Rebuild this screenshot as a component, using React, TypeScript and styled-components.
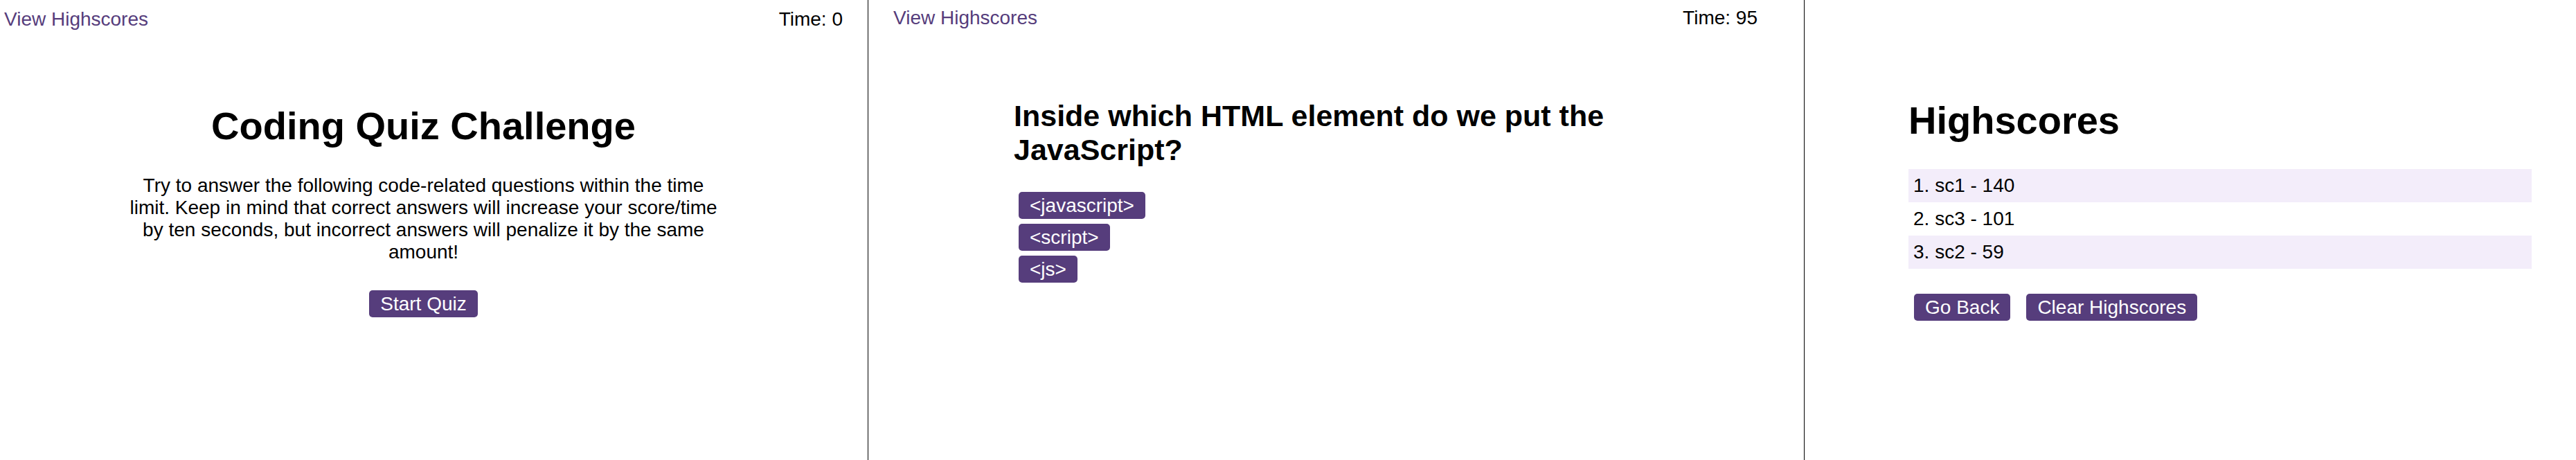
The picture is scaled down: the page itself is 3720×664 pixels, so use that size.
import React from 'react'
import styled, { createGlobalStyle } from 'styled-components'

const GlobalStyle = createGlobalStyle`
  html, body {
    margin: 0;
    padding: 0;
    background: #fff;
  }
  body {
    font-family: "Liberation Sans", Arial, sans-serif;
    font-size: 28px;
    color: #000;
  }
`

const purple = '#563d7c'

const Page = styled.div`
  display: flex;
  width: 3720px;
  height: 664px;
  overflow: hidden;
`

const Panel = styled.section<{ $width?: number; $pad: string; $last?: boolean }>`
  box-sizing: border-box;
  flex: ${(p) => (p.$width ? `0 0 ${p.$width}px` : '1 1 auto')};
  height: 100%;
  padding: ${(p) => p.$pad};
  border-right: ${(p) => (p.$last ? 'none' : '1px solid #000')};
  display: flex;
  flex-direction: column;
`

const Header = styled.header<{ $top: number }>`
  display: flex;
  justify-content: space-between;
  align-items: baseline;
  padding-top: ${(p) => p.$top}px;
  line-height: normal;
`

const HighscoreLink = styled.a`
  color: ${purple};
  text-decoration: none;
  cursor: pointer;
`

const Timer = styled.span`
  color: #000;
`

const Intro = styled.div`
  display: flex;
  flex-direction: column;
  align-items: center;
  text-align: center;
  padding-top: 105px;
`

const Title = styled.h1`
  margin: 0 0 38px;
  font-size: 56px;
  font-weight: 700;
  line-height: normal;
`

const Lead = styled.p`
  margin: 0 0 39px;
  max-width: 860px;
  line-height: normal;
`

const Button = styled.button`
  font-family: inherit;
  font-size: 28px;
  line-height: normal;
  color: #fff;
  background: ${purple};
  border: none;
  border-radius: 5px;
  padding: 3px 16px;
  height: 39px;
  cursor: pointer;
`

const Quiz = styled.div`
  width: 900px;
  margin: 101px auto 0;
`

const Question = styled.h2`
  margin: 0 0 36px;
  font-size: 43px;
  font-weight: 700;
  line-height: normal;
`

const Answers = styled.div`
  display: flex;
  flex-direction: column;
  align-items: flex-start;
  gap: 7px;
  padding-left: 7px;
`

const Scores = styled.div`
  width: 900px;
  padding-top: 141px;
`

const ScoreList = styled.ol`
  list-style: none;
  margin: 0;
  padding: 0;
`

const ScoreRow = styled.li<{ $shaded: boolean }>`
  height: 48px;
  box-sizing: border-box;
  padding: 8px 7px;
  line-height: normal;
  background: ${(p) => (p.$shaded ? '#f3edfa' : 'transparent')};
`

const Actions = styled.div`
  display: flex;
  gap: 23px;
  margin-top: 36px;
  padding-left: 8px;
`

const scores = [
  { name: 'sc1', score: 140 },
  { name: 'sc3', score: 101 },
  { name: 'sc2', score: 59 }
]

const answers = ['<javascript>', '<script>', '<js>']

const App: React.FC = () => {
  return (
    <>
      <GlobalStyle />
      <Page>
        <Panel $width={1254} $pad="0 36px 0 6px">
          <Header $top={12}>
            <HighscoreLink>View Highscores</HighscoreLink>
            <Timer>Time: 0</Timer>
          </Header>
          <Intro>
            <Title>Coding Quiz Challenge</Title>
            <Lead>
              Try to answer the following code-related questions within the time limit. Keep in mind
              that correct answers will increase your score/time by ten seconds, but incorrect answers
              will penalize it by the same amount!
            </Lead>
            <Button>Start Quiz</Button>
          </Intro>
        </Panel>

        <Panel $width={1352} $pad="0 67px 0 36px">
          <Header $top={10}>
            <HighscoreLink>View Highscores</HighscoreLink>
            <Timer>Time: 95</Timer>
          </Header>
          <Quiz>
            <Question>Inside which HTML element do we put the JavaScript?</Question>
            <Answers>
              {answers.map((a) => (
                <Button key={a}>{a}</Button>
              ))}
            </Answers>
          </Quiz>
        </Panel>

        <Panel $pad="0 0 0 150px" $last>
          <Scores>
            <Title>Highscores</Title>
            <ScoreList>
              {scores.map((s, i) => (
                <ScoreRow key={s.name} $shaded={i % 2 === 0}>
                  {i + 1}. {s.name} - {s.score}
                </ScoreRow>
              ))}
            </ScoreList>
            <Actions>
              <Button>Go Back</Button>
              <Button>Clear Highscores</Button>
            </Actions>
          </Scores>
        </Panel>
      </Page>
    </>
  )
}

export default App
